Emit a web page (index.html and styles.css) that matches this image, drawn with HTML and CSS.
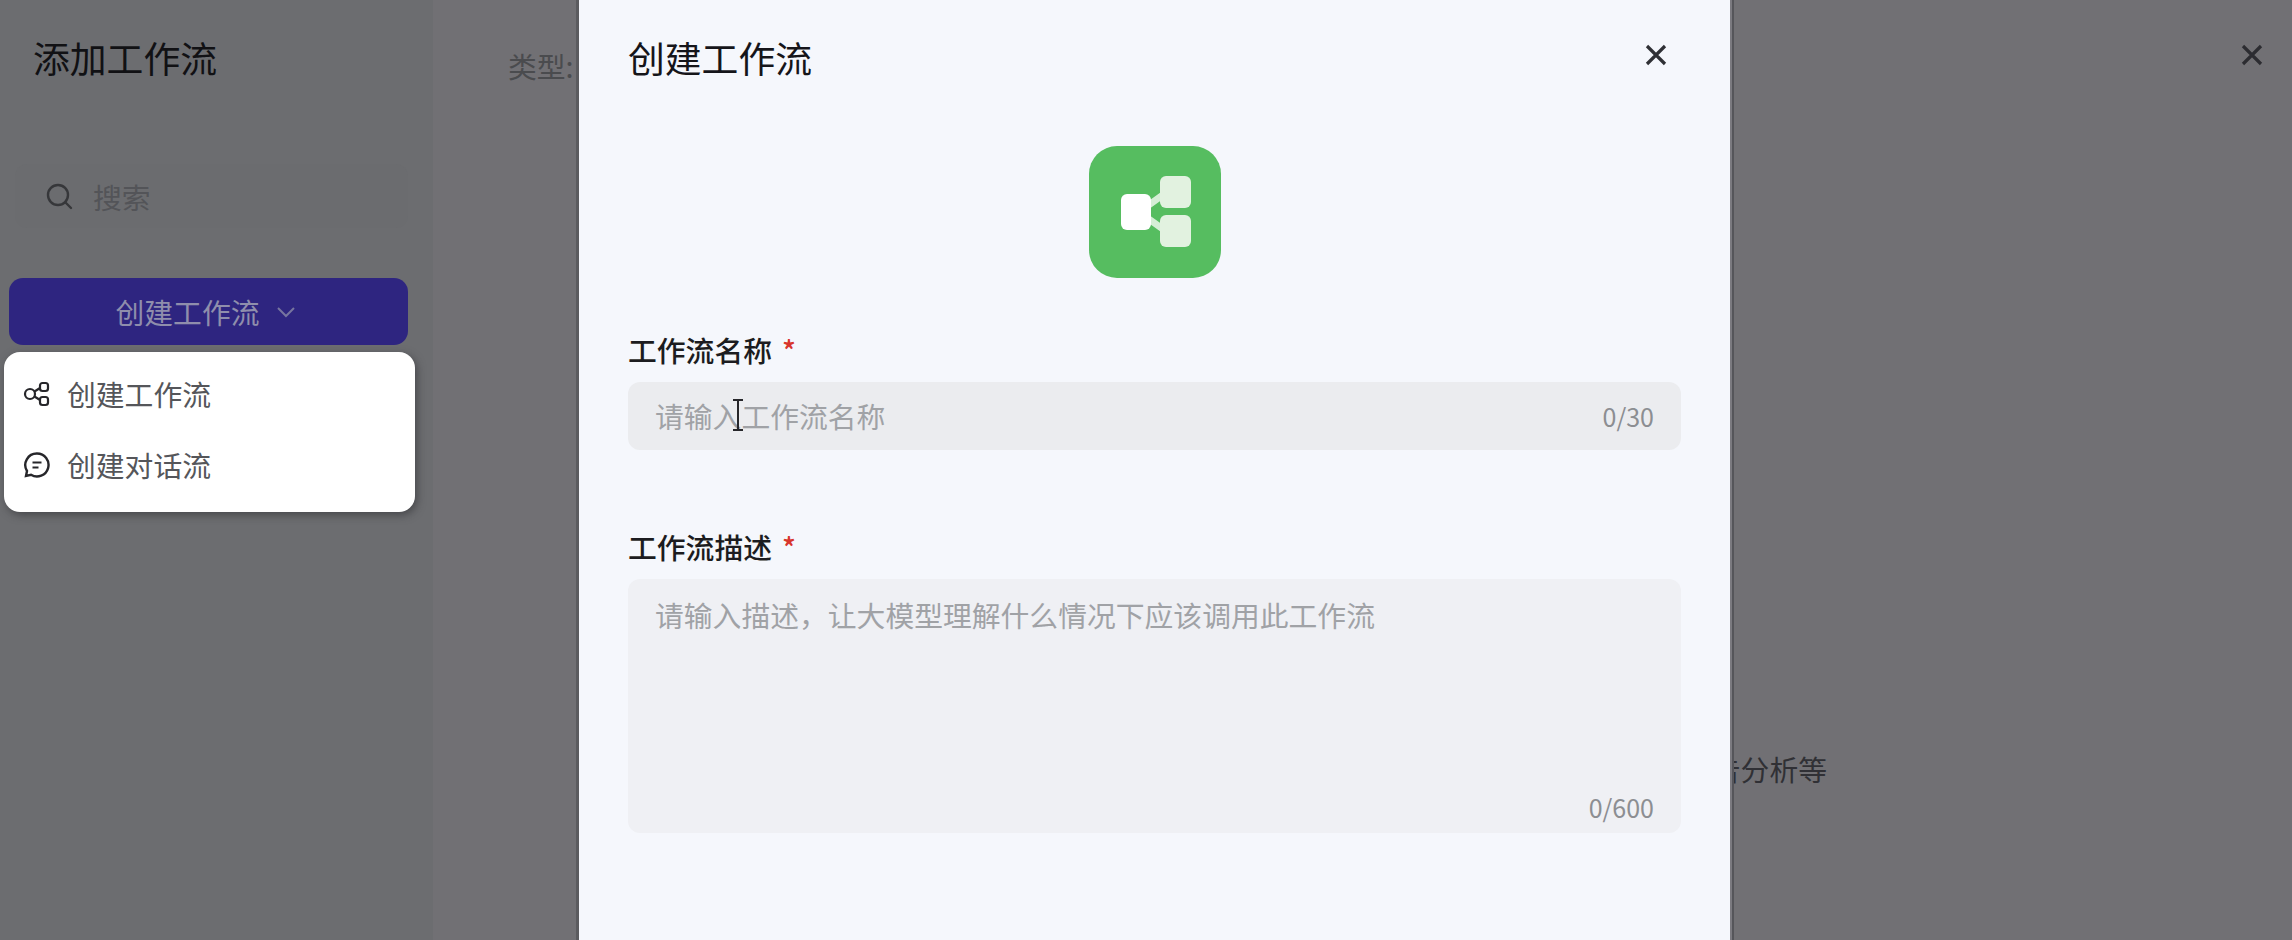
FILE: index.html
```html
<!DOCTYPE html>
<html lang="zh-CN">
<head>
    <meta charset="UTF-8">
    <title>创建工作流</title>
    <link rel="stylesheet" href="styles.css">
</head>
<body>
    <div class="page">
        <aside class="side_panel">
            <h2 class="side_title">添加工作流</h2>
            <div class="search_box">
                <svg class="search_icon" viewBox="0 0 28 28" width="28" height="28"><circle cx="13" cy="13" r="10" fill="none" stroke="#36373a" stroke-width="2.4"/><path d="M20.5 20.5L26 26" stroke="#36373a" stroke-width="2.4" stroke-linecap="round"/></svg>
                <span>搜索</span>
            </div>
            <button class="create_btn">创建工作流
                <svg viewBox="0 0 20 12" width="20" height="12"><path d="M2 2l8 8 8-8" fill="none" stroke="#77759f" stroke-width="2"/></svg>
            </button>
        </aside>
        <main class="main_area">
            <div class="type_row">类型:</div>
            <button class="page_close">
                <svg viewBox="0 0 24 24" width="24" height="24"><path d="M3 3l18 18M21 3L3 21" stroke="#2c2c31" stroke-width="3.2"/></svg>
            </button>
            <p class="main_desc">例如旅行规划、报告分析等</p>
        </main>
    </div>

    <ul class="create_menu">
        <li>
            <svg viewBox="0 0 28 28" width="28" height="28" fill="none" stroke="#26262a" stroke-width="2.2"><circle cx="7" cy="14" r="5"/><rect x="17" y="3" width="8" height="8" rx="2.5"/><rect x="17" y="17" width="8" height="8" rx="2.5"/><path d="M11.5 11.5L17 8M11.5 16.5L17 20"/></svg>
            创建工作流
        </li>
        <li>
            <svg viewBox="0 0 28 28" width="28" height="28" fill="none" stroke="#26262a" stroke-width="2.4"><path d="M14 2.5a11.5 11.5 0 1 1-6 21.3L3 25l1-5A11.5 11.5 0 0 1 14 2.5z"/><path d="M9.5 11.5h9M9.5 16.5h6" stroke-width="2"/></svg>
            创建对话流
        </li>
    </ul>

    <section class="modal">
        <header class="modal_head">
            <h2 class="modal_title">创建工作流</h2>
            <button class="modal_close">
                <svg viewBox="0 0 24 24" width="24" height="24"><path d="M3 3l18 18M21 3L3 21" stroke="#2f3035" stroke-width="3.2"/></svg>
            </button>
        </header>
        <div class="flow_icon">
            <svg viewBox="0 0 132 132" width="132" height="132">
                <path d="M50 66L78 46M50 66L78 86" stroke="#d5eed6" stroke-width="7"/>
                <rect x="32" y="48" width="30" height="36" rx="6" fill="#fff"/>
                <rect x="71" y="30" width="31" height="32" rx="6" fill="#e2f2e0"/>
                <rect x="71" y="69" width="31" height="32" rx="6" fill="#e2f2e0"/>
            </svg>
        </div>
        <div class="form_field">
            <label class="field_label">工作流名称<i>*</i></label>
            <div class="input_box">
                <span class="holder">请输入工作流名称</span>
                <span class="count">0/30</span>
                <svg class="text_cursor" viewBox="0 0 12 32" width="12" height="32"><path d="M1 1h10M6 1v30M1 31h10" stroke="#26262a" stroke-width="2" fill="none"/></svg>
            </div>
        </div>
        <div class="form_field">
            <label class="field_label">工作流描述<i>*</i></label>
            <div class="textarea_box">
                <span class="holder">请输入描述，让大模型理解什么情况下应该调用此工作流</span>
                <span class="count">0/600</span>
            </div>
        </div>
    </section>
</body>
</html>
```

FILE: styles.css
```css
*{
    margin: 0;
    padding: 0;
    box-sizing: border-box;
}
body{
    height: 100vh;
    overflow: hidden;
    font-family: "Noto Sans CJK SC", "Noto Sans", sans-serif;
    font-size: 28.8px;
    background-color: #717074;
}
button{
    border: none;
    background: none;
    font: inherit;
}
.page{
    display: flex;
    height: 100%;
}
.side_panel{
    width: 433px;
    padding: 0 25px 0 9px;
    background-color: #6c6d70;
}
.side_title{
    height: 114px;
    padding-left: 24px;
    font-size: 36.8px;
    font-weight: 400;
    line-height: 114px;
    color: #111114;
}
.search_box{
    display: flex;
    align-items: center;
    gap: 20px;
    height: 64px;
    margin: 50px 0 50px 6px;
    padding-left: 30px;
    border-radius: 12px;
    background-color: #6b6c6f;
    color: #535458;
}
.create_btn{
    display: flex;
    justify-content: center;
    align-items: center;
    gap: 16px;
    width: 399px;
    height: 67px;
    padding-right: 6px;
    border-radius: 14px;
    background-color: #2e2580;
    color: #8f8eac;
}
.main_area{
    flex: 1;
    position: relative;
    padding: 42px 465px 0 75px;
}
.type_row{
    line-height: 48px;
    color: #4a4b4e;
}
.page_close{
    position: absolute;
    top: 43px;
    right: 28px;
    line-height: 0;
}
.main_desc{
    margin-top: 657px;
    line-height: 44px;
    text-align: right;
    color: #303035;
}
.create_menu{
    position: absolute;
    top: 352px;
    left: 4px;
    width: 411px;
    height: 160px;
    padding: 6px 0 0 19px;
    list-style: none;
    border-radius: 16px;
    background-color: #fff;
    box-shadow: 2px 3px 8px rgba(40,40,44,0.55);
    color: #55565a;
}
.create_menu li{
    display: flex;
    align-items: center;
    gap: 16px;
    height: 71px;
}
.modal{
    position: absolute;
    top: 0;
    bottom: 0;
    left: 579px;
    width: 1151px;
    padding: 0 49px;
    background-color: #f5f7fc;
    box-shadow: -3px 0 0 #5b5b5f, 2px 0 0 #7b7a80, 4px 0 0 #55555a;
}
.modal_head{
    display: flex;
    justify-content: space-between;
    align-items: center;
    height: 116px;
    padding-bottom: 2px;
}
.modal_title{
    font-size: 36.8px;
    font-weight: 400;
    color: #15151a;
}
.modal_close{
    margin: -4px 13px 0 0;
    line-height: 0;
}
.flow_icon{
    width: 132px;
    height: 132px;
    margin: 30px auto 52px;
    border-radius: 28px;
    background-color: #56bd60;
}
.form_field{
    margin-bottom: 77px;
}
.field_label{
    display: block;
    height: 40px;
    margin-bottom: 12px;
    font-weight: 500;
    line-height: 40px;
    color: #1c1c20;
}
.field_label i{
    margin-left: 10px;
    font-style: normal;
    color: #d8352c;
}
.input_box{
    display: flex;
    justify-content: space-between;
    align-items: center;
    position: relative;
    height: 68px;
    padding: 0 27px;
    border-radius: 12px;
    background-color: #ebecef;
}
.textarea_box{
    display: flex;
    flex-direction: column;
    justify-content: space-between;
    height: 254px;
    padding: 14px 27px 6px;
    border-radius: 12px;
    background-color: #eff0f4;
}
.holder{
    line-height: 44px;
    color: #a0a2a6;
}
.count{
    font-size: 25px;
    line-height: 40px;
    color: #8c8e92;
}
.textarea_box .count{
    align-self: flex-end;
}
.text_cursor{
    position: absolute;
    top: 17px;
    left: 104px;
}
```
